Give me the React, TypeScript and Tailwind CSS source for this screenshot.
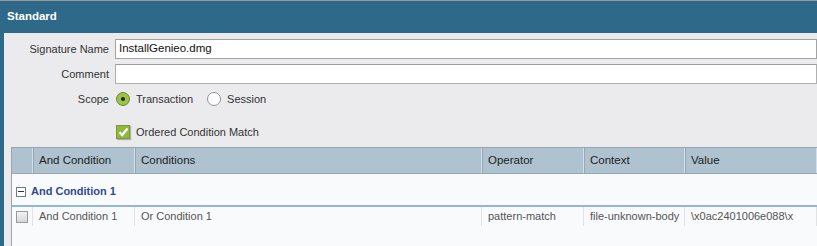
import React from 'react';

const cols = [
  { label: '', w: 'w-[21px]' },
  { label: 'And Condition', w: 'w-[102px]' },
  { label: 'Conditions', w: 'w-[347px]' },
  { label: 'Operator', w: 'w-[102px]' },
  { label: 'Context', w: 'w-[101px]' },
  { label: 'Value', w: 'flex-1' },
];

const row = ['', 'And Condition 1', 'Or Condition 1', 'pattern-match', 'file-unknown-body', '\\x0ac2401006e088\\x'];

const Radio: React.FC<{ checked?: boolean }> = ({ checked }) => (
  <span
    className={
      'flex h-[14px] w-[14px] items-center justify-center rounded-full border ' +
      (checked ? 'border-[#6d8a2e] bg-[#9bc24a]' : 'border-[#8e9397] bg-white')
    }
  >
    {checked && <span className="h-[4px] w-[4px] rounded-full bg-[#222]" />}
  </span>
);

const App: React.FC = () => {
  return (
    <div
      className="h-[246px] w-[817px] overflow-hidden border-t border-[#9a9a9a] bg-[#2f6989] text-[11px] text-[#333]"
      style={{ fontFamily: '"Liberation Sans", Arial, sans-serif' }}
    >
      <div className="flex h-[32px] items-center pl-[7px] text-[11.5px] font-bold text-white">Standard</div>
      <div className="ml-[4px] h-full bg-[#ebebed] pt-[6px]">
        <div className="flex flex-col gap-[5px]">
          <div className="flex items-center">
            <div className="w-[111px] pr-[6px] text-right">Signature Name</div>
            <div className="flex h-[20px] flex-1 items-center border border-[#a3a3a3] bg-white pl-[3px] text-[11.5px] text-[#111]">
              InstallGenieo.dmg
            </div>
          </div>
          <div className="flex items-center">
            <div className="w-[111px] pr-[6px] text-right">Comment</div>
            <div className="h-[20px] flex-1 border border-[#b0b0b0] border-t-[#9c9c9c] bg-white" />
          </div>
          <div className="flex h-[20px] items-center">
            <div className="w-[111px] pr-[6px] text-right">Scope</div>
            <div className="ml-[1px] flex items-center gap-[6px]">
              <Radio checked />
              <span>Transaction</span>
            </div>
            <div className="ml-[14px] flex items-center gap-[6px]">
              <Radio />
              <span>Session</span>
            </div>
          </div>
        </div>
        <div className="mt-[13px] flex h-[20px] items-center pl-[112px]">
          <span className="flex h-[14px] w-[14px] items-center justify-center border border-[#7d9a3a] bg-[#8fb83d] shadow-[1px_1px_1px_rgba(0,0,0,0.25)]">
            <svg width="11" height="10" viewBox="0 0 11 10">
              <path d="M1.5 5.2 L4.2 8 L9.5 1.5" fill="none" stroke="#fff" strokeWidth="2.2" />
            </svg>
          </span>
          <span className="ml-[6px]">Ordered Condition Match</span>
        </div>
        <div className="ml-[7px] mt-[5px] h-[120px] border-l border-t border-[#9aa5ad] bg-[#f9fafb]">
          <div className="flex h-[26px] border-b border-[#93a7b6] bg-[#aec2d0]">
            {cols.map((c, i) => (
              <div
                key={i}
                className={c.w + ' flex items-center border-r border-[#d4dfe7] pl-[6px] text-[11.5px] text-[#222] shadow-[1px_0_0_#94a8b6]'}
              >
                {c.label}
              </div>
            ))}
          </div>
          <div className="flex h-[31px] items-center pl-[4px] pt-[4px]">
            <span className="flex h-[10px] w-[10px] items-center justify-center border border-[#6b7a8c] bg-white">
              <span className="h-px w-[6px] bg-[#333]" />
            </span>
            <span className="ml-[5px] font-bold text-[#2f4c92]">And Condition 1</span>
          </div>
          <div className="h-[2px] bg-[#94b6de]" />
          <div className="flex h-[19px]">
            {cols.map((c, i) => (
              <div key={i} className={c.w + ' flex items-center border-r border-[#e0e2e4] pl-[6px] text-[#555]'}>
                {i === 0 ? (
                  <span className="-ml-[2px] h-[12px] w-[12px] border border-[#9a9a9a] bg-gradient-to-b from-[#f2f2f2] to-[#d8d8d8]" />
                ) : (
                  row[i]
                )}
              </div>
            ))}
          </div>
        </div>
      </div>
    </div>
  );
};

export default App;
